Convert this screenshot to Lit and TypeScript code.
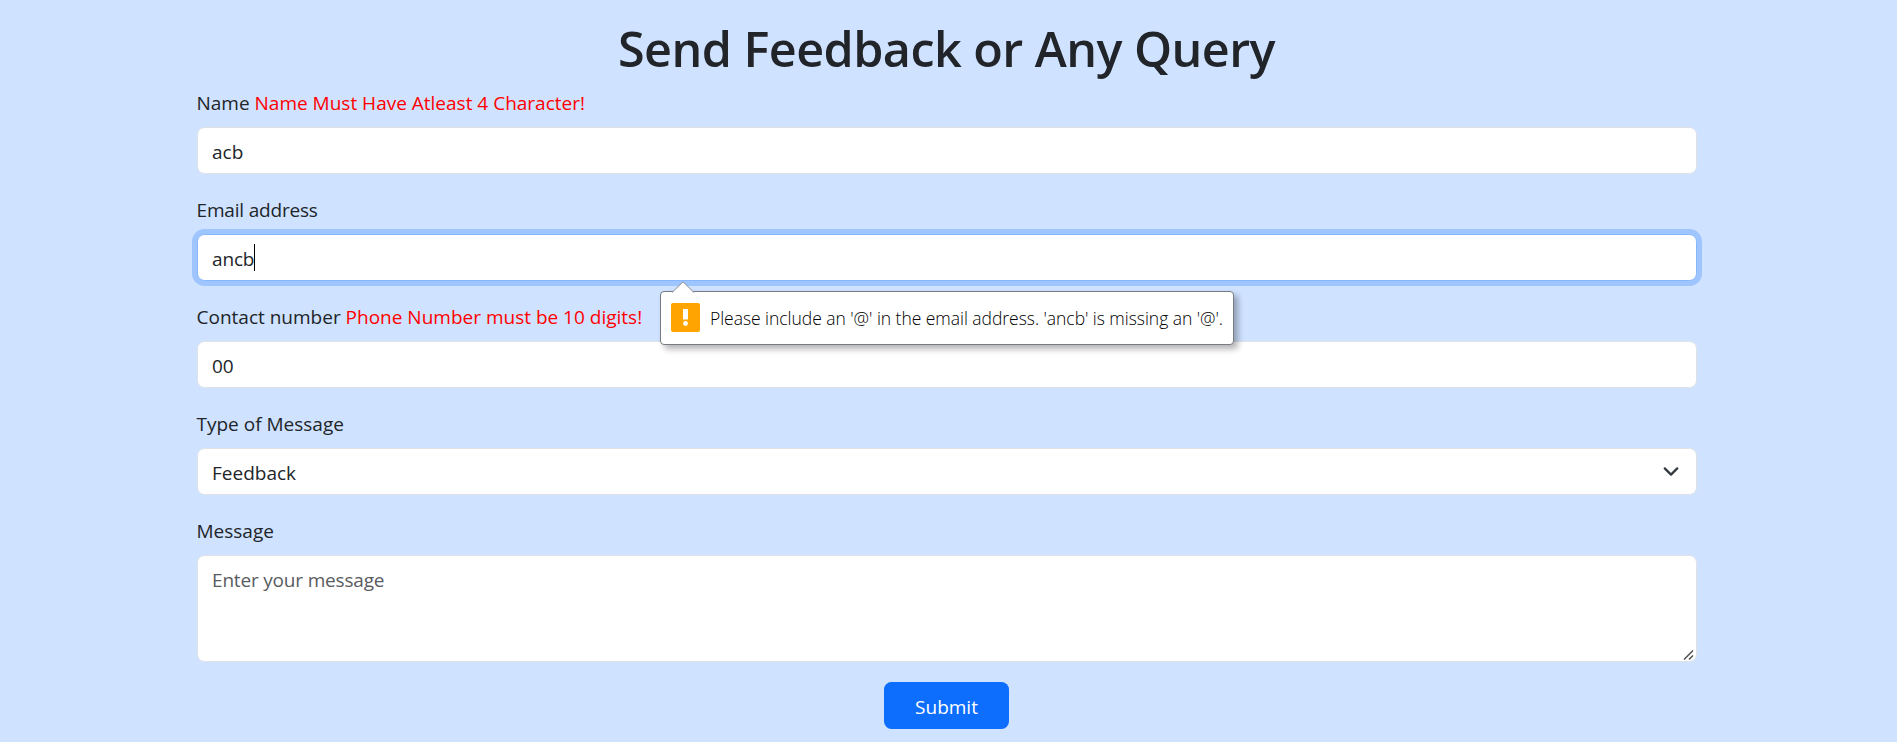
import { LitElement, html, css } from "lit";
import { customElement } from "lit/decorators.js";

@customElement("app-root")
export class AppRoot extends LitElement {
  static styles = css`
    :host { display: block; height: 742px; overflow: hidden; background: #cfe2ff; color: #212529;
      font-family: "Open Sans", "Noto Sans", sans-serif; font-size: 19px; font-weight: 400; line-height: 30px; }
    * { box-sizing: border-box; }
    form { width: 1500px; margin: 0 auto 0 196.5px; padding-top: 18px; display: flex; flex-direction: column; }
    h1 { margin: 0 0 10px; height: 60px; line-height: 60px; font-size: 48.5px; font-weight: 600; letter-spacing: -0.55px; text-align: center; white-space: nowrap; }
    .field { position: relative; margin-bottom: 21px; display: flex; flex-direction: column; }
    .label { height: 30px; margin-bottom: 9px; white-space: nowrap; }
    .tight { letter-spacing: -0.18px; }
    .error { color: #ff0000; }
    .control { display: flex; align-items: center; justify-content: space-between; height: 47px; padding: 2px 15px 0 14.5px; background: #fff;
      border: 1px solid #dee2e6; border-radius: 7.5px; }
    .focused { border-color: #86b7fe; box-shadow: 0 0 0 5px #9ec5fe; }
    .text { display: flex; align-items: center; letter-spacing: -0.15px; }
    .caret { width: 1px; height: 27px; margin-top: -3px; background: #000; }
    .area { height: 107px; align-items: stretch; padding: 9px 0 0 14.5px; color: #595c5f; }
    .grip { align-self: flex-end; }
    .chevron { margin-top: -3px; }
    button { align-self: center; width: 125px; height: 47px; margin-top: -1px; border: 0; border-radius: 7.5px; background: #0d6efd; color: #fff; font: inherit; padding: 2px 0 0; }
    .tip { position: absolute; left: 463.5px; top: 96px; width: 574px; height: 54px; z-index: 2; background: #fff; border: 1px solid #777b82;
      border-radius: 4px; box-shadow: 4px 4px 6px rgba(0,0,0,.3); display: flex; align-items: center; padding-left: 10px; gap: 10px; color: #000; font-size: 17.5px; font-weight: 300; letter-spacing: -0.04px; white-space: nowrap; }
    .badge { margin-top: -2px; }
    .arrow { position: absolute; left: 10px; top: -11px; }
    svg { display: block; flex: none; }
  `;
  render() {
    return html`<form>
      <h1><span>Send Feedback or Any Query</span></h1>
      <div class="field"><div class="label">Name <span class="error">Name Must Have Atleast 4 Character!</span></div>
        <div class="control"><span>acb</span></div></div>
      <div class="field"><div class="label tight">Email address</div>
        <div class="control focused"><span class="text">ancb<i class="caret"></i></span></div>
        <div class="tip">
          <svg class="arrow" width="24" height="12" viewBox="0 0 24 12"><path d="M1 11.5 12 .8 23 11.5V12H1Z" fill="#fff"/><path d="M1 11.5 12 .8 23 11.5" fill="none" stroke="#8a8d92"/></svg>
          <svg class="badge" width="29" height="29" viewBox="0 0 29 29"><rect width="29" height="29" rx="2" fill="#ffa400"/><path d="M12 6h5v10.5h-5Z" fill="#fff"/><circle cx="14.5" cy="20.5" r="2.4" fill="#fff"/></svg>
          <span>Please include an '@' in the email address. 'ancb' is missing an '@'.</span>
        </div></div>
      <div class="field"><div class="label">Contact number <span class="error">Phone Number must be 10 digits!</span></div>
        <div class="control"><span>00</span></div></div>
      <div class="field"><div class="label">Type of Message</div>
        <div class="control"><span>Feedback</span>
          <svg class="chevron" width="20" height="15" viewBox="0 0 16 12"><path d="m3 3.5 5 5 5-5" fill="none" stroke="#343a40" stroke-width="1.8" stroke-linecap="round" stroke-linejoin="round"/></svg></div></div>
      <div class="field"><div class="label">Message</div>
        <div class="control area"><span class="tight">Enter your message</span>
          <svg class="grip" width="14" height="14" viewBox="0 0 14 14"><path d="M2 12.5 11 3.5M7 12.5l4-4" stroke="#555" stroke-width="1.6"/></svg></div></div>
      <button type="button">Submit</button>
    </form>`;
  }
}
